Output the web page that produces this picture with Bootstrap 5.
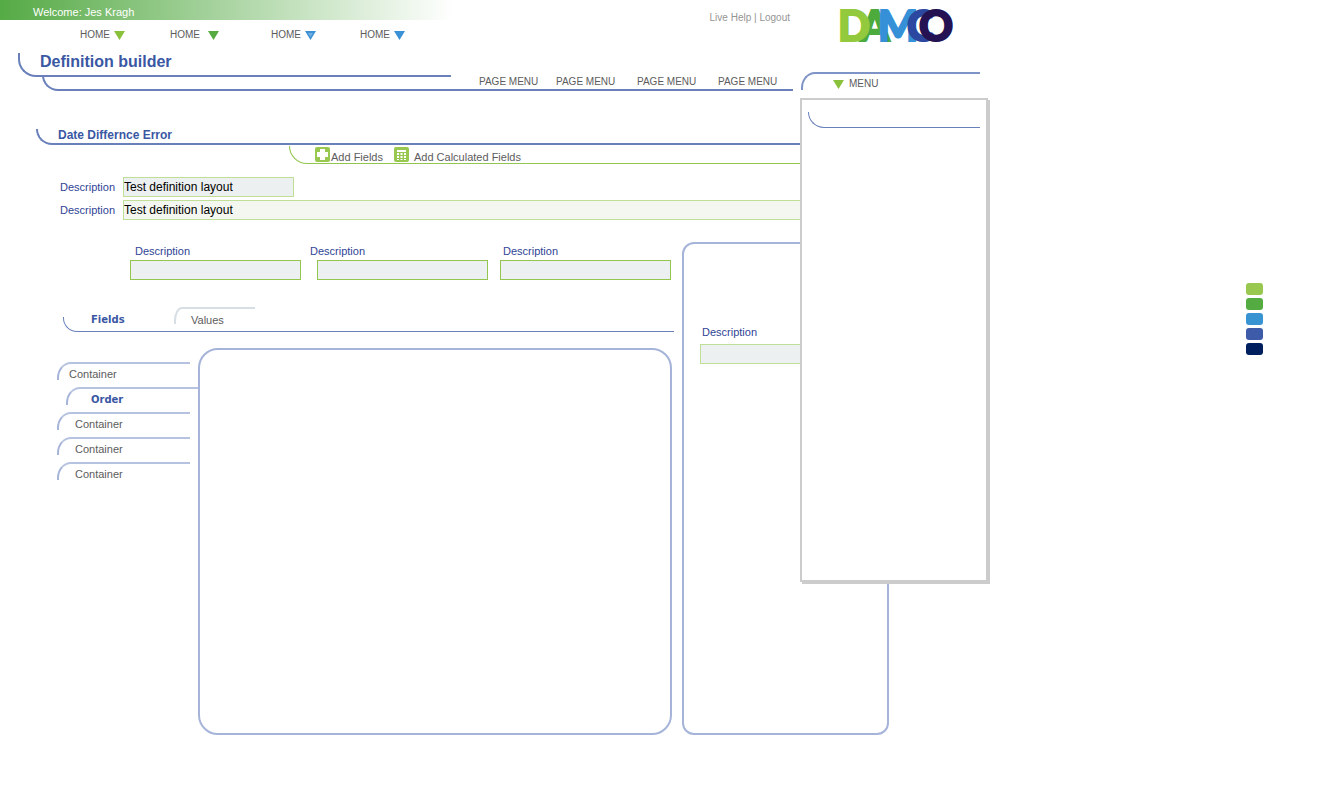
<!DOCTYPE html>
<html lang="en">
<head>
<meta charset="utf-8">
<meta name="viewport" content="width=device-width, initial-scale=1">
<title>Definition builder</title>
<link rel="stylesheet" href="https://cdn.jsdelivr.net/npm/bootstrap@5.3.0/dist/css/bootstrap.min.css">
<style>
  :root { --line: #6980bb; --line-soft: #a5b4d8; --ink: #5c5c5c; --brand: #3a57a3; --label: #2f4496; --lime: #94c54e; --lime-soft: #bfdf96; }
  body { font-family: "Liberation Sans", Arial, sans-serif; font-size: 11px; line-height: 14px; color: var(--ink); background: #fff; }
  a { color: inherit; text-decoration: none; }
  .top-left { flex: 0 1 793px; }
  .top-right { flex: 0 0 179px; margin-left: 8px; }
  .top-strip { height: 20px; }
  .welcome { width: 453px; max-width: 100%; height: 20px; padding: 5px 0 0 33px; color: #fff; background: linear-gradient(90deg, #55ab45, #61b052 7%, #fff); }
  .main-nav { display: grid; grid-template-columns: 90px 101px 89px auto; padding: 8px 0 0 80px; font-size: 10px; }
  .help-links { padding: 11px 3px 0 0; font-size: 10px; color: #959595; }
  .brand-logo { overflow: visible; stroke-width: 2px; }

  /* lines with one rounded corner */
  .hook { border: solid var(--line); border-width: 0 0 2px 2px; border-bottom-left-radius: 18px; }
  .hook-top { border: solid var(--line-soft); border-width: 2px 0 0 2px; border-top-left-radius: 14px 16px; }
  .page-title { width: 433px; height: 24px; margin: 11px 0 0 18px; padding-left: 20px; font-size: 16px; line-height: 17px; font-weight: bold; color: var(--brand); }
  .page-menu { height: 16px; margin-left: 42px; }
  .page-menu nav { display: grid; grid-template-columns: 77px 81px 81px 75px; justify-content: end; margin-top: -2px; font-size: 10px; }
  .section-title { height: 16px; margin: 38px 0 0 36px; padding-left: 20px; font-size: 12px; line-height: 12px; font-weight: bold; color: var(--brand); }
  .tools { height: 18px; gap: 10px; margin: 1px 0 13px 289px; padding-left: 24px; border-width: 0 0 1px 1px; border-color: var(--lime); }
  .tools button, .menu-tab button { padding: 0; border: 0; background: none; color: var(--ink); }

  .menu-tab { height: 18px; margin-top: 27px; border-color: #7e93c6; padding: 3px 0 0 30px; }
  .menu-tab button { gap: 5px; font-size: 10px; }
  .dropdown-pane { position: absolute; left: -1px; top: 98px; z-index: 5; width: 188px; height: 484px; padding: 12px 6px; background: #fff; border: 2px solid #ccc; box-shadow: 2px 2px 0 #ccc; }
  .dropdown-pane .hook { height: 16px; border-width: 0 0 1px 1px; }

  .workspace { flex: 0 1 889px; min-width: 0; }
  .line-field { padding-left: 60px; margin-bottom: 3px; }
  .line-field label { width: 63px; }
  label { color: var(--label); }
  .box { height: 20px; width: 171px; padding: 0; border: 1px solid var(--lime); background: #ecf0f1; font-size: 12px; color: #000; border-radius: 0; }
  .box-soft { border-color: var(--lime-soft); }
  .box-wide { background: #f3f7ef; }
  .work-row { margin-top: 22px; }
  .trio { display: grid; grid-template-columns: 187px 183px 171px; padding: 2px 0 0 73px; }
  .trio label { display: block; height: 16px; padding-left: 5px; line-height: 14px; }
  .trio .pull label { margin-left: -7px; padding-left: 0; }
  .trio .near label { padding-left: 3px; }
  .left-work { padding-left: 57px; margin-right: 10px; }
  .tabs { height: 15px; margin: 37px -2px 0 6px; border-width: 0 0 1px 1px; border-bottom-left-radius: 14px; }
  .tabs .fields { width: 110px; padding-left: 27px; margin-top: -4px; }
  .tabs .values { width: 81px; height: 17px; margin-top: -10px; padding: 4px 0 0 15px; border-color: #d7dee4; border-top-left-radius: 8px 14px; }
  .strong-tab { font-family: "DejaVu Sans", sans-serif; font-size: 10px; font-weight: bold; color: var(--brand); }
  .side-tabs { flex: 0 0 141px; padding-top: 14px; }
  .side-tabs a { display: block; height: 18px; width: 133px; margin-bottom: 7px; padding: 3px 0 0 16px; border-color: #b6c3e0; border-left-color: #a5b4d8; }
  .side-tabs a:first-child { padding-left: 10px; }
  .side-tabs a.strong-tab { width: auto; margin-left: 9px; padding: 4px 0 0 23px; }
  .frame { border: 2px solid var(--line-soft); border-radius: 20px; }
  .canvas { height: 387px; }
  .side-panel { flex: 0 0 207px; height: 493px; padding: 81px 0 0 16px; border-radius: 12px; }
  .side-panel label { display: block; height: 19px; padding-left: 2px; line-height: 14px; }
  .palette { padding-right: 64px; margin-top: 192px; gap: 3px; }
  .palette span { width: 17px; height: 12px; border-radius: 3px; }
</style>
</head>
<body>
<header class="d-flex position-relative">
  <div class="top-left">
    <div class="top-strip d-flex justify-content-between">
      <div class="welcome">Welcome: Jes Kragh</div>
      <div class="help-links text-nowrap"><a href="#">Live Help</a> | <a href="#">Logout</a></div>
    </div>
    <nav class="main-nav" aria-label="Main">
      <a href="#" class="d-flex align-items-center gap-1">HOME <svg width="11" height="9"><path d="M0 0H11L5.500 9Z" fill="#8ac13a"/></svg></a>
      <a href="#" class="d-flex align-items-center gap-2">HOME <svg width="11" height="9"><path d="M0 0H11L5.500 9Z" fill="#56ab40"/></svg></a>
      <a href="#" class="d-flex align-items-center gap-1">HOME <svg width="11" height="9"><path d="M0 0H11L5.500 9Z" fill="#3b91d6"/><path d="M3 2H8L5.500 6Z" fill="#74afdf"/></svg></a>
      <a href="#" class="d-flex align-items-center gap-1">HOME <svg width="11" height="9"><path d="M0 0H11L5.500 9Z" fill="#3b91d6"/></svg></a>
    </nav>
    <h1 class="hook page-title mb-0">Definition builder</h1>
    <div class="hook page-menu">
      <nav aria-label="Page">
        <a href="#">PAGE MENU</a><a href="#">PAGE MENU</a><a href="#">PAGE MENU</a><a href="#">PAGE MENU</a>
      </nav>
    </div>
  </div>
  <div class="top-right position-relative">
    <svg class="brand-logo d-block" width="160" height="45" role="img" aria-label="Damco" font-family="Lato, sans-serif" font-weight="900" font-size="42">
      <text x="59" y="41" fill="#4cab3c" stroke="#4cab3c">A</text>
      <text x="37" y="41" fill="#93ca3d" stroke="#93ca3d">D</text>
      <text x="77" y="41" fill="#3590d8" stroke="#3590d8">M</text>
      <text x="106" y="41" fill="#2b479f" stroke="#2b479f">C</text>
      <text x="118" y="41" fill="#241252" stroke="#241252">O</text>
    </svg>
    <div class="hook-top menu-tab">
      <button type="button" class="d-flex align-items-center" aria-expanded="true"><svg width="11" height="9"><path d="M0 0H11L5.500 9Z" fill="#8ac13a"/></svg>MENU</button>
    </div>
    <div class="dropdown-pane"><div class="hook"></div></div>
  </div>
</header>

<div class="d-flex justify-content-between">
  <main class="workspace">
    <h2 class="hook section-title mb-0">Date Differnce Error</h2>
    <div class="hook tools d-flex align-items-start">
      <button type="button" class="d-flex"><svg width="17" height="17"><rect x="1" y="1" width="15" height="15" rx="2" fill="#98c84f"/><path d="M6 3h5v3h3v5h-3v3H6v-3H3V6h3Z" fill="#fff"/></svg><span class="pt-1">Add Fields</span></button>
      <button type="button" class="d-flex"><svg class="me-1" width="17" height="17"><rect x="1" y="1" width="15" height="15" rx="2" fill="#98c84f"/><path d="M4 4h9v2H4ZM4 7h2v2H4ZM7.500 7h2v2h-2ZM11 7h2v2h-2ZM4 10h2v2H4ZM7.500 10h2v2h-2ZM11 10h2v2h-2ZM4 13h2v1H4ZM7.500 13h2v1h-2ZM11 13h2v1h-2Z" fill="#fff"/></svg><span class="pt-1">Add Calculated Fields</span></button>
    </div>
    <div class="line-field d-flex align-items-center"><label for="name">Description</label><input id="name" class="box box-soft" value="Test definition layout"></div>
    <div class="line-field d-flex align-items-center"><label for="details">Description</label><input id="details" class="box box-soft box-wide flex-grow-1" value="Test definition layout"></div>

    <div class="work-row d-flex">
      <div class="left-work flex-grow-1">
        <div class="trio">
          <div><label for="f1">Description</label><input id="f1" class="box"></div>
          <div class="pull"><label for="f2">Description</label><input id="f2" class="box"></div>
          <div class="near"><label for="f3">Description</label><input id="f3" class="box"></div>
        </div>
        <nav class="hook tabs d-flex" aria-label="Definition parts">
          <a href="#" class="fields strong-tab">Fields</a>
          <a href="#" class="hook-top values">Values</a>
        </nav>
        <div class="d-flex mt-3">
          <nav class="side-tabs" aria-label="Groups">
            <a href="#" class="hook-top">Container</a>
            <a href="#" class="hook-top strong-tab">Order</a>
            <a href="#" class="hook-top">Container</a>
            <a href="#" class="hook-top">Container</a>
            <a href="#" class="hook-top">Container</a>
          </nav>
          <section class="frame canvas flex-grow-1" aria-label="Fields"></section>
        </div>
      </div>
      <aside class="frame side-panel">
        <label for="f4">Description</label><input id="f4" class="box box-soft">
      </aside>
    </div>
  </main>
  <aside class="palette d-flex flex-column" aria-label="Colours">
    <span style="background:#98c84f"></span><span style="background:#54ab42"></span><span style="background:#3893d3"></span><span style="background:#3d5ba8"></span><span style="background:#001f5f"></span>
  </aside>
</div>
<script src="https://cdn.jsdelivr.net/npm/bootstrap@5.3.0/dist/js/bootstrap.bundle.min.js"></script>
</body>
</html>
